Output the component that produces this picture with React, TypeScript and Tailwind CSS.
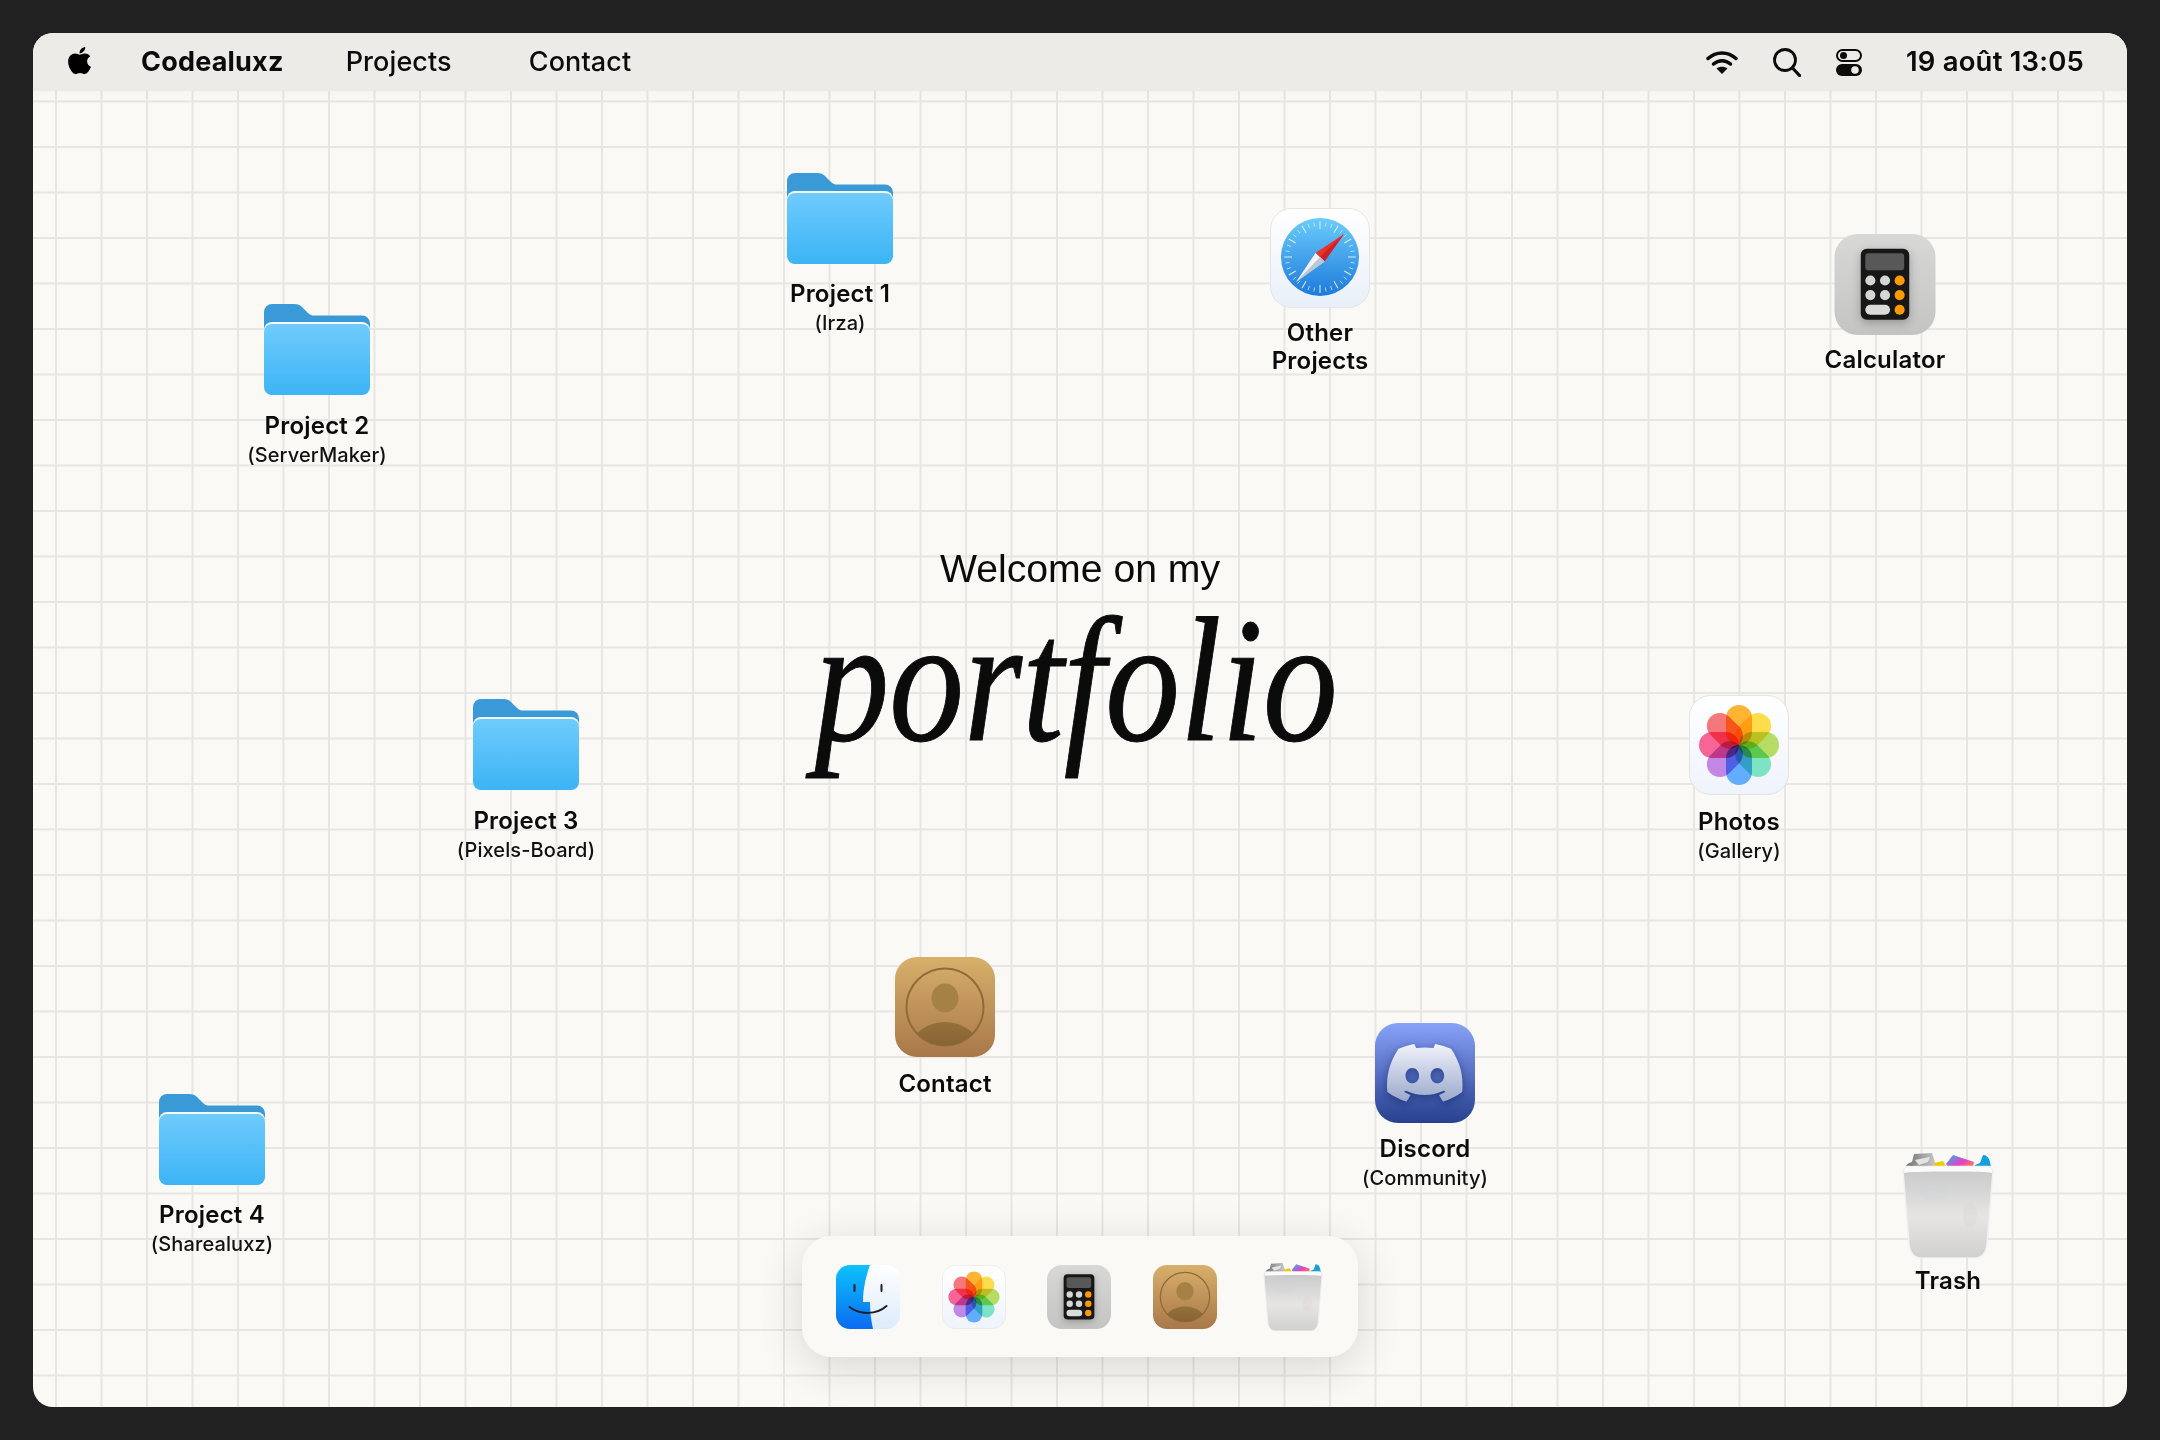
import type { ReactNode } from "react";
import { FaApple } from "react-icons/fa";

const Folder = () => (
  <svg viewBox="0 0 106 91" className="h-[91px] w-[106px]">
    <defs>
      <linearGradient id="folderFront" x1="0" y1="0" x2="0" y2="1">
        <stop offset="0" stopColor="#6fcbfd" />
        <stop offset="1" stopColor="#3cb4f5" />
      </linearGradient>
    </defs>
    <path
      d="M0 8a8 8 0 0 1 8-8h22c4 0 6 1 8 3l6 6c2 2 4 2.500 6 2.500h48a8 8 0 0 1 8 8V40H0Z"
      fill="#3a9ad8"
    />
    <rect x="0" y="18" width="106" height="73" rx="8" fill="#f4fbff" />
    <path
      d="M0 28a8 8 0 0 1 8-8h90a8 8 0 0 1 8 8v55a8 8 0 0 1-8 8H8a8 8 0 0 1-8-8Z"
      fill="url(#folderFront)"
    />
  </svg>
);

const Safari = ({ size }: { size: string }) => (
  <svg viewBox="0 0 100 100" className={size}>
    <defs>
      <linearGradient id="safariBg" x1="0" y1="0" x2="0" y2="1">
        <stop offset="0" stopColor="#ffffff" />
        <stop offset="1" stopColor="#e9eff9" />
      </linearGradient>
      <linearGradient id="safariDial" x1="0" y1="0" x2="0" y2="1">
        <stop offset="0" stopColor="#6accfb" />
        <stop offset="1" stopColor="#1e7adb" />
      </linearGradient>
    </defs>
    <rect x="0.500" y="0.500" width="99" height="99" rx="21" fill="url(#safariBg)" stroke="#e6e4e0" />
    <circle cx="50" cy="49" r="39" fill="url(#safariDial)" />
    {Array.from({ length: 36 }).map((_, i) => (
      <line
        key={i}
        x1="50"
        y1={i % 3 === 0 ? 13 : 14}
        x2="50"
        y2={i % 3 === 0 ? 21 : 18}
        stroke="#d9effc"
        strokeWidth={i % 3 === 0 ? 1 : 0.7}
        transform={`rotate(${i * 10} 50 49)`}
      />
    ))}
    <polygon points="74,26 54.500,53.500 45.500,45" fill="#ef2f2b" />
    <polygon points="74,26 54.500,53.500 50,49" fill="#c9232a" />
    <polygon points="26,74 45.500,45 54.500,53.500" fill="#f2f4f7" />
    <polygon points="26,74 50,49 54.500,53.500" fill="#bcc7d4" />
  </svg>
);

const Calculator = ({ size }: { size: string }) => (
  <svg viewBox="0 0 100 100" className={size}>
    <defs>
      <linearGradient id="calcBg" x1="0" y1="0" x2="0" y2="1">
        <stop offset="0" stopColor="#d8d8d7" />
        <stop offset="1" stopColor="#c4c4c3" />
      </linearGradient>
    </defs>
    <rect width="100" height="100" rx="23" fill="url(#calcBg)" />
    <rect x="26" y="14.500" width="48" height="70.500" rx="6" fill="#171717" className="drop-shadow-[0_3px_5px_rgba(0,0,0,0.25)]" />
    <rect x="30.500" y="19" width="38.500" height="17" rx="3" fill="#585858" />
    {[46, 60.500].map((cy) => (
      <g key={cy}>
        <circle cx="35.500" cy={cy} r="5" fill="#d6d6d5" />
        <circle cx="50" cy={cy} r="5" fill="#d6d6d5" />
        <circle cx="64.500" cy={cy} r="5" fill="#ff9a00" />
      </g>
    ))}
    <rect x="30.500" y="70" width="24.500" height="10" rx="5" fill="#dbdbda" />
    <circle cx="64.500" cy="75" r="5" fill="#ff9a00" />
  </svg>
);

const petals = ["#ffa100", "#ffd51f", "#a6d53d", "#5fe0b4", "#3f9bff", "#b46be0", "#f5407c", "#f4565a"];

const Photos = ({ size }: { size: string }) => (
  <svg viewBox="0 0 100 100" className={size}>
    <defs>
      <linearGradient id="photosBg" x1="0" y1="0" x2="0" y2="1">
        <stop offset="0" stopColor="#ffffff" />
        <stop offset="1" stopColor="#eff3fc" />
      </linearGradient>
    </defs>
    <rect x="0.500" y="0.500" width="99" height="99" rx="21" fill="url(#photosBg)" stroke="#e5e3df" />
    <g className="isolate">
      {petals.map((color, i) => (
        <rect
          key={color}
          x="37"
          y="10"
          width="26"
          height="40"
          rx="13"
          fill={color}
          fillOpacity="0.8"
          className="mix-blend-multiply"
          transform={`rotate(${i * 45} 50 50)`}
        />
      ))}
    </g>
  </svg>
);

const Contact = ({ size }: { size: string }) => (
  <svg viewBox="0 0 100 100" className={size}>
    <defs>
      <linearGradient id="contactBg" x1="0" y1="0" x2="0" y2="1">
        <stop offset="0" stopColor="#d8af6b" />
        <stop offset="1" stopColor="#a87849" />
      </linearGradient>
      <linearGradient id="contactBody" x1="0" y1="0" x2="0" y2="1">
        <stop offset="0" stopColor="#94703a" />
        <stop offset="1" stopColor="#77562b" />
      </linearGradient>
      <clipPath id="contactRing">
        <circle cx="50" cy="50" r="38.500" />
      </clipPath>
    </defs>
    <rect width="100" height="100" rx="22" fill="url(#contactBg)" />
    <circle cx="50" cy="50" r="38.500" fill="none" stroke="#8e6c3a" strokeWidth="2" />
    <ellipse cx="50" cy="41" rx="13.500" ry="14.500" fill="#a68146" />
    <ellipse cx="50" cy="90" rx="33" ry="25" fill="url(#contactBody)" clipPath="url(#contactRing)" />
  </svg>
);

const Discord = ({ size }: { size: string }) => (
  <svg viewBox="0 0 100 100" className={size}>
    <defs>
      <linearGradient id="discordBg" x1="0" y1="0" x2="0" y2="1">
        <stop offset="0" stopColor="#88a2f9" />
        <stop offset="1" stopColor="#27408f" />
      </linearGradient>
      <linearGradient id="discordMark" x1="0" y1="0" x2="0" y2="1">
        <stop offset="0" stopColor="#f1f3fb" />
        <stop offset="1" stopColor="#9aa8ca" />
      </linearGradient>
    </defs>
    <rect width="100" height="100" rx="23" fill="url(#discordBg)" />
    <g transform="translate(12 12) scale(3.150)" className="drop-shadow-[0_1.500px_1.500px_rgba(15,35,100,0.55)]">
      <path
        fill="url(#discordMark)"
        d="M20.317 4.3698a19.7913 19.7913 0 00-4.8851-1.5152.0741.0741 0 00-.0785.0371c-.211.3753-.4447.8648-.6083 1.2495-1.8447-.2762-3.68-.2762-5.4868 0-.1636-.3933-.4058-.8742-.6177-1.2495a.077.077 0 00-.0785-.037 19.7363 19.7363 0 00-4.8852 1.515.0699.0699 0 00-.0321.0277C.5334 9.0458-.319 13.5799.0992 18.0578a.0824.0824 0 00.0312.0561c2.0528 1.5076 4.0413 2.4228 5.9929 3.0294a.0777.0777 0 00.0842-.0276c.4616-.6304.8731-1.2952 1.226-1.9942a.076.076 0 00-.0416-.1057c-.6528-.2476-1.2743-.5495-1.8722-.8923a.077.077 0 01-.0076-.1277c.1258-.0943.2517-.1923.3718-.2914a.0743.0743 0 01.0776-.0105c3.9278 1.7933 8.18 1.7933 12.0614 0a.0739.0739 0 01.0785.0095c.1202.099.246.1981.3728.2924a.077.077 0 01-.0066.1276 12.2986 12.2986 0 01-1.873.8914.0766.0766 0 00-.0407.1067c.3604.698.7719 1.3628 1.225 1.9932a.076.076 0 00.0842.0286c1.961-.6067 3.9495-1.5219 6.0023-3.0294a.077.077 0 00.0313-.0552c.5004-5.177-.8382-9.6739-3.5485-13.6604a.061.061 0 00-.0312-.0286zM8.02 15.3312c-1.1825 0-2.1569-1.0857-2.1569-2.419 0-1.3332.9555-2.4189 2.157-2.4189 1.2108 0 2.1757 1.0952 2.1568 2.419 0 1.3332-.9555 2.4189-2.1569 2.4189zm7.9748 0c-1.1825 0-2.1569-1.0857-2.1569-2.419 0-1.3332.9554-2.4189 2.1569-2.4189 1.2108 0 2.1757 1.0952 2.1568 2.419 0 1.3332-.946 2.4189-2.1568 2.4189Z"
      />
    </g>
  </svg>
);

const Trash = ({ size }: { size: string }) => (
  <svg viewBox="0 0 92 105" className={size}>
    <defs>
      <linearGradient id="trashBody" x1="0" y1="0" x2="0" y2="1">
        <stop offset="0" stopColor="#c8c8c8" />
        <stop offset="0.55" stopColor="#e6e5e4" />
        <stop offset="1" stopColor="#d0d0cf" />
      </linearGradient>
      <linearGradient id="trashPaper" x1="0" y1="0" x2="1" y2="1">
        <stop offset="0" stopColor="#18bdf2" />
        <stop offset="0.5" stopColor="#ea3fc4" />
        <stop offset="1" stopColor="#ffb800" />
      </linearGradient>
      <linearGradient id="trashGrey" x1="0" y1="0" x2="1" y2="0">
        <stop offset="0" stopColor="#707070" />
        <stop offset="0.6" stopColor="#a3a3a3" />
        <stop offset="1" stopColor="#c6c6c6" />
      </linearGradient>
    </defs>
    <path d="M3 20c-1-6 2-10 7-11l2-8 18-1 3 9v11H3Z" fill="url(#trashGrey)" />
    <path d="M13 7l15-3-2 5-9 3Z" fill="#e4e4e4" />
    <path d="M8 12l10 3-6 3Z" fill="#555" />
    <path d="M32 10l9-2 7 12H34Z" fill="#f0c800" />
    <path d="M44 11l7-9 21 7-2 11H50Z" fill="url(#trashPaper)" />
    <path d="M71 20l2-8 5-2 3-8c6 0 8 6 8 18Z" fill="#14a0dc" />
    <path
      d="M1 18c0-3 2-4.500 5-4.500h80c3 0 5 1.500 5 4.500l-6 73c-1 9-5 14-13 14H20c-8 0-12-5-13-14Z"
      fill="url(#trashBody)"
      stroke="#f1f1f0"
      strokeWidth="1.500"
    />
    <ellipse cx="32" cy="40" rx="14" ry="7" fill="#c9d6dc" fillOpacity="0.3" />
    <ellipse cx="68" cy="62" rx="7" ry="12" fill="#e2ccd2" fillOpacity="0.3" />
    <path d="M2 17c0-2 2-3 4-3h80c2 0 4 1 4 3v3c-5-2-83-2-88 0Z" fill="#fbfbfb" />
  </svg>
);

const Finder = ({ size }: { size: string }) => (
  <svg viewBox="0 0 64 64" className={size}>
    <defs>
      <linearGradient id="finderLeft" x1="0" y1="0" x2="0" y2="1">
        <stop offset="0" stopColor="#0ec2fb" />
        <stop offset="1" stopColor="#0a6cf2" />
      </linearGradient>
      <linearGradient id="finderRight" x1="0" y1="0" x2="0" y2="1">
        <stop offset="0" stopColor="#ffffff" />
        <stop offset="1" stopColor="#dcebfb" />
      </linearGradient>
      <clipPath id="finderClip">
        <rect width="64" height="64" rx="14" />
      </clipPath>
    </defs>
    <g clipPath="url(#finderClip)">
      <rect width="64" height="64" fill="url(#finderRight)" />
      <path d="M0 0h34c-4 11-7 24-7 37h7c0 9 1 18 3 27H0Z" fill="url(#finderLeft)" />
    </g>
    <path d="M18.500 20v6M45.500 20v6" stroke="#1d1f24" strokeWidth="2" strokeLinecap="round" />
    <path d="M13.500 42c10 8 27 8 37-1" fill="none" stroke="#1d1f24" strokeWidth="2" strokeLinecap="round" />
  </svg>
);

const WifiIcon = () => (
  <svg viewBox="0 0 32 23" className="h-[23px] w-[32px]" fill="none" stroke="#0b0b0b" strokeLinecap="round">
    <path d="M2 7.500c8-7.500 20-7.500 28 0" strokeWidth="3.500" />
    <path d="M7.500 13c5-4.500 12-4.500 17 0" strokeWidth="3.500" />
    <path d="M16 23l-5.500-5.500c3-2.500 8-2.500 11 0Z" fill="#0b0b0b" stroke="none" />
  </svg>
);

const SearchIcon = () => (
  <svg viewBox="0 0 28 29" className="h-[29px] w-[28px]" fill="none" stroke="#0b0b0b" strokeWidth="2.800" strokeLinecap="round">
    <circle cx="12" cy="12" r="10.500" />
    <path d="M19.500 20l7 7.500" strokeWidth="3.200" />
  </svg>
);

const ControlIcon = () => (
  <svg viewBox="0 0 26 27" className="h-[27px] w-[26px]">
    <rect x="1" y="1" width="24" height="11" rx="5.500" fill="none" stroke="#0b0b0b" strokeWidth="2" />
    <circle cx="7.500" cy="6.500" r="3.500" fill="#0b0b0b" />
    <rect x="0" y="15" width="26" height="12" rx="6" fill="#0b0b0b" />
    <circle cx="19" cy="21" r="3.800" fill="#ecebe7" />
  </svg>
);

function DesktopItem({
  place,
  gap,
  icon,
  name,
  sub,
}: {
  place: string;
  gap: string;
  icon: ReactNode;
  name: ReactNode;
  sub?: string;
}) {
  return (
    <div className={`absolute flex w-[180px] -translate-x-1/2 flex-col items-center text-center ${place}`}>
      {icon}
      <div className={`text-[24px] leading-[28px] font-semibold tracking-[0.2px] text-[#0b0b0b] ${gap}`}>{name}</div>
      {sub && <div className="mt-[2px] text-[20px] leading-[26px] font-medium tracking-[0.1px] text-[#111]">{sub}</div>}
    </div>
  );
}

export default function App() {
  return (
    <div className="h-[1440px] w-full bg-[#212121] p-[33px] font-['Inter',sans-serif]">
      <div className="relative h-full overflow-hidden rounded-[20px] bg-[#faf9f5] bg-[linear-gradient(to_right,#e8e6e3_2px,transparent_2px),linear-gradient(to_bottom,#e8e6e3_2px,transparent_2px)] bg-[size:45.5px_45.5px] bg-[position:22px_22px]">
        <header className="relative flex h-[58px] items-center bg-[#ecebe7] pr-[43px] pl-[33px] text-[#0b0b0b] shadow-[0_4px_14px_rgba(0,0,0,0.025)]">
          <FaApple className="mb-[3px] h-[31px] w-[27px] text-black" />
          <span className="ml-[48px] text-[27px] font-bold tracking-[0.2px]">Codealuxz</span>
          <span className="ml-[62px] text-[27px] font-medium tracking-[0.1px]">Projects</span>
          <span className="ml-[77px] text-[27px] font-medium tracking-[0.1px]">Contact</span>
          <div className="ml-auto flex items-center">
            <WifiIcon />
            <div className="ml-[35px]">
              <SearchIcon />
            </div>
            <div className="ml-[35px]">
              <ControlIcon />
            </div>
            <span className="ml-[44px] text-[27.500px] font-semibold tracking-[0.2px]">19 août 13:05</span>
          </div>
        </header>

        <div className="absolute top-[512px] left-0 flex w-full flex-col items-center text-[#0b0b0b]">
          <div className="font-['Liberation_Sans',sans-serif] text-[39.200px] leading-[48px]">Welcome on my</div>
          <div className="mt-[12px] scale-x-[0.84] pr-[8px] font-['Liberation_Serif',serif] text-[178px] leading-[150px] italic [-webkit-text-stroke:1px_#0b0b0b]">
            portfolio
          </div>
        </div>

        <DesktopItem place="left-[807px] top-[140px]" gap="mt-[16px]" icon={<Folder />} name="Project 1" sub="(Irza)" />
        <DesktopItem place="left-[284px] top-[271px]" gap="mt-[17px]" icon={<Folder />} name="Project 2" sub="(ServerMaker)" />
        <DesktopItem place="left-[493px] top-[666px]" gap="mt-[17px]" icon={<Folder />} name="Project 3" sub="(Pixels-Board)" />
        <DesktopItem place="left-[179px] top-[1061px]" gap="mt-[16px]" icon={<Folder />} name="Project 4" sub="(Sharealuxz)" />
        <DesktopItem
          place="left-[1287px] top-[175px]"
          gap="mt-[11px]"
          icon={<Safari size="h-[100px] w-[100px]" />}
          name={
            <>
              Other
              <br />
              Projects
            </>
          }
        />
        <DesktopItem place="left-[1852px] top-[201px]" gap="mt-[11px]" icon={<Calculator size="h-[101px] w-[102px]" />} name="Calculator" />
        <DesktopItem place="left-[1706px] top-[662px]" gap="mt-[13px]" icon={<Photos size="h-[100px] w-[100px]" />} name="Photos" sub="(Gallery)" />
        <DesktopItem place="left-[912px] top-[924px]" gap="mt-[13px]" icon={<Contact size="h-[100px] w-[100px]" />} name="Contact" />
        <DesktopItem place="left-[1392px] top-[990px]" gap="mt-[12px]" icon={<Discord size="h-[100px] w-[100px]" />} name="Discord" sub="(Community)" />
        <DesktopItem place="left-[1915px] top-[1120px]" gap="mt-[9px]" icon={<Trash size="h-[105px] w-[92px]" />} name="Trash" />

        <div className="absolute bottom-[50px] left-1/2 flex h-[121px] w-[556px] -translate-x-1/2 items-center gap-[41.500px] rounded-[30px] bg-[#faf9f5]/85 pl-[34px] shadow-[0_10px_45px_rgba(0,0,0,0.14)] backdrop-blur-md">
          <Finder size="h-[64px] w-[64px]" />
          <Photos size="h-[64px] w-[64px]" />
          <Calculator size="h-[64px] w-[64px]" />
          <Contact size="h-[64px] w-[64px]" />
          <Trash size="ml-[5px] h-[68px] w-[60px]" />
        </div>
      </div>
    </div>
  );
}
